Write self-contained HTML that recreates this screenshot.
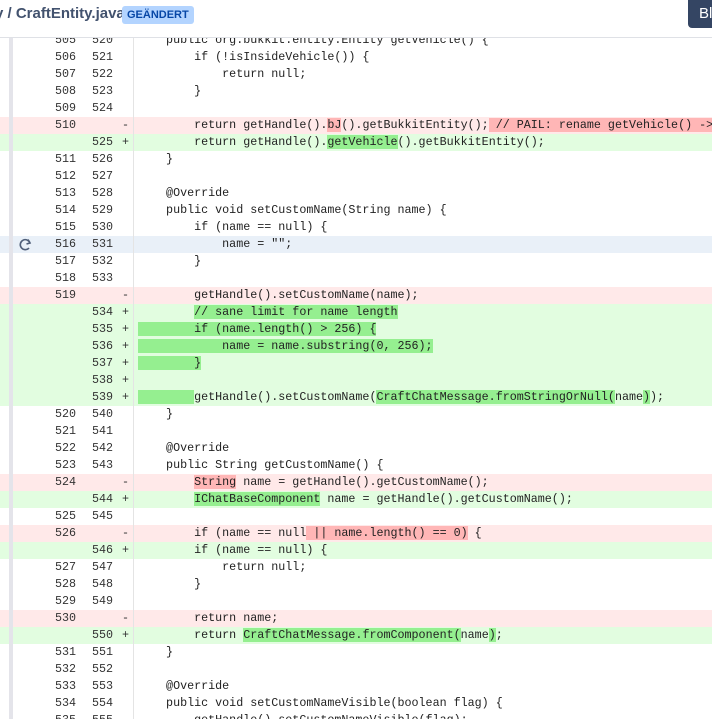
<html><head><style>
body{margin:0;width:712px;height:719px;overflow:hidden;background:#fff;position:relative;font-family:"Liberation Mono",monospace}
.hdr{position:absolute;left:0;top:0;width:712px;height:37px;background:#fff;border-bottom:1px solid #dfe1e6;z-index:5;overflow:hidden}
.t{position:absolute;left:-5px;top:5px;font:bold 15px "Liberation Sans",sans-serif;color:#42526e;white-space:pre}
.b{position:absolute;left:122px;top:6px;background:#b3d4ff;color:#0747a6;font:bold 11px "Liberation Sans",sans-serif;padding:3px 5px;border-radius:3px}
.btn{position:absolute;left:688px;top:0;width:40px;height:28px;background:#344563;border-radius:0 0 0 4px;color:#fff;font:15px "Liberation Sans",sans-serif;line-height:28px;padding-left:11px}
.rows{position:absolute;left:0;top:32px;width:712px;overflow:hidden;height:687px}
.r{position:relative;height:17px;font-size:11.7px;line-height:17px;color:#222;white-space:pre;overflow:hidden}
.d{background:#ffe9e9}.a{background:#e2fde0}.h{background:#e9f0f8}
.o,.n,.s{position:absolute;text-align:right;color:#333}
.o{left:40px;width:36px}.n{left:77px;width:36px}.s{left:122px;width:8px;text-align:left}
.c{position:absolute;left:138px}
.strip{position:absolute;left:9px;top:38px;width:4px;height:681px;background:#e4e4ea;z-index:2}
.div{position:absolute;left:133px;top:38px;width:1px;height:681px;background:#e4e4e4;z-index:2}
.x{background:#ffb6b6}.g{background:#95ef90}
.ic{position:absolute;left:19px;top:2px}
</style></head><body>
<div class="hdr"><div class="t">y / CraftEntity.java</div><div class="b">GEÄNDERT</div><div class="btn">Bl</div></div>
<div class="strip"></div><div class="div"></div>
<div class="rows">
<div class="r"><span class="o">505</span><span class="n">520</span><span class="c">    public org.bukkit.entity.Entity getVehicle() {</span></div>
<div class="r"><span class="o">506</span><span class="n">521</span><span class="c">        if (!isInsideVehicle()) {</span></div>
<div class="r"><span class="o">507</span><span class="n">522</span><span class="c">            return null;</span></div>
<div class="r"><span class="o">508</span><span class="n">523</span><span class="c">        }</span></div>
<div class="r"><span class="o">509</span><span class="n">524</span></div>
<div class="r d"><span class="o">510</span><span class="s">-</span><span class="c">        return getHandle().<span class="x">bJ</span>().getBukkitEntity();<span class="x"> // PAIL: rename getVehicle() -> bJ()</span></span></div>
<div class="r a"><span class="n">525</span><span class="s">+</span><span class="c">        return getHandle().<span class="g">getVehicle</span>().getBukkitEntity();</span></div>
<div class="r"><span class="o">511</span><span class="n">526</span><span class="c">    }</span></div>
<div class="r"><span class="o">512</span><span class="n">527</span></div>
<div class="r"><span class="o">513</span><span class="n">528</span><span class="c">    @Override</span></div>
<div class="r"><span class="o">514</span><span class="n">529</span><span class="c">    public void setCustomName(String name) {</span></div>
<div class="r"><span class="o">515</span><span class="n">530</span><span class="c">        if (name == null) {</span></div>
<div class="r h"><svg class="ic" width="14" height="13" viewBox="0 0 14 13"><path d="M11 5A5 5 0 1 0 10 10" fill="none" stroke="#505f79" stroke-width="1.6"/><path d="M9 1.5l2 3.5-3.5 1" fill="none" stroke="#505f79" stroke-width="1.6"/></svg><span class="o">516</span><span class="n">531</span><span class="c">            name = "";</span></div>
<div class="r"><span class="o">517</span><span class="n">532</span><span class="c">        }</span></div>
<div class="r"><span class="o">518</span><span class="n">533</span></div>
<div class="r d"><span class="o">519</span><span class="s">-</span><span class="c">        getHandle().setCustomName(name);</span></div>
<div class="r a"><span class="n">534</span><span class="s">+</span><span class="c">        <span class="g">// sane limit for name length</span></span></div>
<div class="r a"><span class="n">535</span><span class="s">+</span><span class="c"><span class="g">        if (name.length() &gt; 256) {</span></span></div>
<div class="r a"><span class="n">536</span><span class="s">+</span><span class="c"><span class="g">            name = name.substring(0, 256);</span></span></div>
<div class="r a"><span class="n">537</span><span class="s">+</span><span class="c"><span class="g">        }</span></span></div>
<div class="r a"><span class="n">538</span><span class="s">+</span></div>
<div class="r a"><span class="n">539</span><span class="s">+</span><span class="c"><span class="g">        </span>getHandle().setCustomName(<span class="g">CraftChatMessage.fromStringOrNull(</span>name<span class="g">)</span>);</span></div>
<div class="r"><span class="o">520</span><span class="n">540</span><span class="c">    }</span></div>
<div class="r"><span class="o">521</span><span class="n">541</span></div>
<div class="r"><span class="o">522</span><span class="n">542</span><span class="c">    @Override</span></div>
<div class="r"><span class="o">523</span><span class="n">543</span><span class="c">    public String getCustomName() {</span></div>
<div class="r d"><span class="o">524</span><span class="s">-</span><span class="c">        <span class="x">String</span> name = getHandle().getCustomName();</span></div>
<div class="r a"><span class="n">544</span><span class="s">+</span><span class="c">        <span class="g">IChatBaseComponent</span> name = getHandle().getCustomName();</span></div>
<div class="r"><span class="o">525</span><span class="n">545</span></div>
<div class="r d"><span class="o">526</span><span class="s">-</span><span class="c">        if (name == null<span class="x"> || name.length() == 0)</span> {</span></div>
<div class="r a"><span class="n">546</span><span class="s">+</span><span class="c">        if (name == null) {</span></div>
<div class="r"><span class="o">527</span><span class="n">547</span><span class="c">            return null;</span></div>
<div class="r"><span class="o">528</span><span class="n">548</span><span class="c">        }</span></div>
<div class="r"><span class="o">529</span><span class="n">549</span></div>
<div class="r d"><span class="o">530</span><span class="s">-</span><span class="c">        return name;</span></div>
<div class="r a"><span class="n">550</span><span class="s">+</span><span class="c">        return <span class="g">CraftChatMessage.fromComponent(</span>name<span class="g">)</span>;</span></div>
<div class="r"><span class="o">531</span><span class="n">551</span><span class="c">    }</span></div>
<div class="r"><span class="o">532</span><span class="n">552</span></div>
<div class="r"><span class="o">533</span><span class="n">553</span><span class="c">    @Override</span></div>
<div class="r"><span class="o">534</span><span class="n">554</span><span class="c">    public void setCustomNameVisible(boolean flag) {</span></div>
<div class="r"><span class="o">535</span><span class="n">555</span><span class="c">        getHandle().setCustomNameVisible(flag);</span></div>
</div>
</body></html>
